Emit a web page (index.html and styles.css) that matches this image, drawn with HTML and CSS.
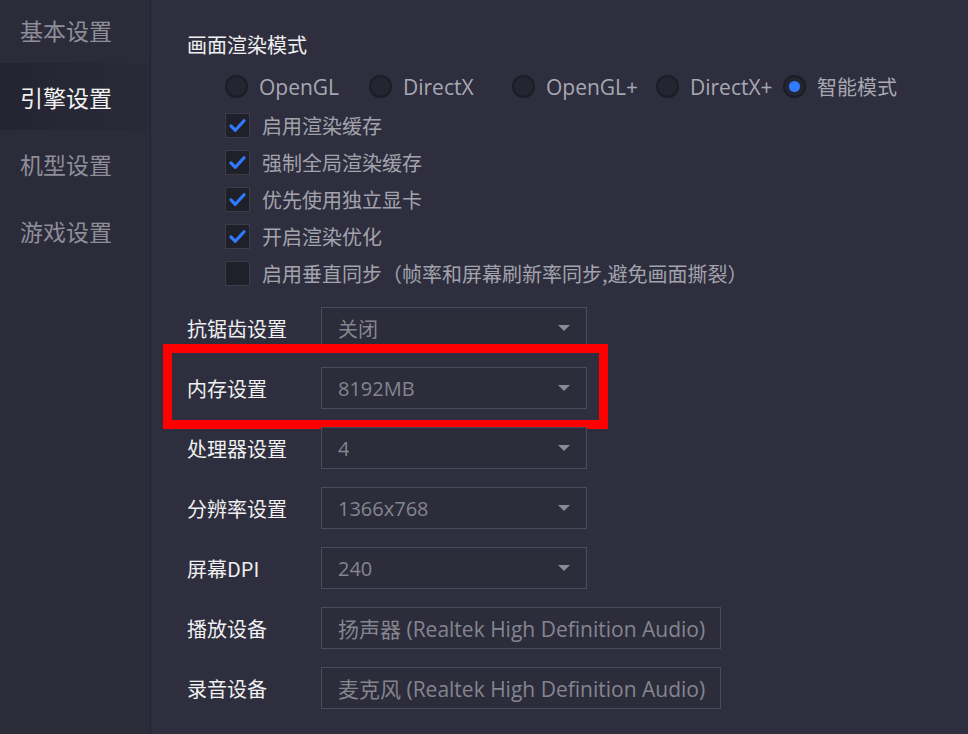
FILE: index.html
```html
<!DOCTYPE html>
<html lang="zh">
<head>
    <meta charset="UTF-8">
    <title>引擎设置</title>
    <link rel="stylesheet" href="styles.css">
</head>
<body>
    <div class="window">
        <div class="sidebar">
            <div class="nav-item">基本设置</div>
            <div class="nav-item active">引擎设置</div>
            <div class="nav-item">机型设置</div>
            <div class="nav-item">游戏设置</div>
        </div>

        <div class="main">
            <div class="section-title">画面渲染模式</div>

            <div class="options">
                <div class="radio-row">
                    <label class="radio"><span class="dot"></span>OpenGL</label>
                    <label class="radio"><span class="dot"></span>DirectX</label>
                    <label class="radio"><span class="dot"></span>OpenGL+</label>
                    <label class="radio"><span class="dot"></span>DirectX+</label>
                    <label class="radio on"><span class="dot"></span>智能模式</label>
                </div>

                <div class="check-list">
                    <label class="check on"><span class="box"><svg viewBox="0 0 24 24" width="21" height="21"><polyline points="4.5,12.5 9.5,17.5 19.5,6.5" fill="none" stroke="#2f7bff" stroke-width="3.6" stroke-linecap="round" stroke-linejoin="round"/></svg></span>启用渲染缓存</label>
                    <label class="check on"><span class="box"><svg viewBox="0 0 24 24" width="21" height="21"><polyline points="4.5,12.5 9.5,17.5 19.5,6.5" fill="none" stroke="#2f7bff" stroke-width="3.6" stroke-linecap="round" stroke-linejoin="round"/></svg></span>强制全局渲染缓存</label>
                    <label class="check on"><span class="box"><svg viewBox="0 0 24 24" width="21" height="21"><polyline points="4.5,12.5 9.5,17.5 19.5,6.5" fill="none" stroke="#2f7bff" stroke-width="3.6" stroke-linecap="round" stroke-linejoin="round"/></svg></span>优先使用独立显卡</label>
                    <label class="check on"><span class="box"><svg viewBox="0 0 24 24" width="21" height="21"><polyline points="4.5,12.5 9.5,17.5 19.5,6.5" fill="none" stroke="#2f7bff" stroke-width="3.6" stroke-linecap="round" stroke-linejoin="round"/></svg></span>开启渲染优化</label>
                    <label class="check"><span class="box"></span>启用垂直同步（帧率和屏幕刷新率同步,避免画面撕裂）</label>
                </div>
            </div>

            <div class="form">
                <div class="form-row">
                    <span class="form-label">抗锯齿设置</span>
                    <div class="select"><span class="value">关闭</span><span class="arrow"></span></div>
                </div>
                <div class="form-row marked">
                    <span class="form-label">内存设置</span>
                    <div class="select"><span class="value">8192MB</span><span class="arrow"></span></div>
                    <div class="highlight"></div>
                </div>
                <div class="form-row">
                    <span class="form-label">处理器设置</span>
                    <div class="select"><span class="value">4</span><span class="arrow"></span></div>
                </div>
                <div class="form-row">
                    <span class="form-label">分辨率设置</span>
                    <div class="select"><span class="value">1366x768</span><span class="arrow"></span></div>
                </div>
                <div class="form-row">
                    <span class="form-label">屏幕DPI</span>
                    <div class="select"><span class="value">240</span><span class="arrow"></span></div>
                </div>
                <div class="form-row">
                    <span class="form-label">播放设备</span>
                    <div class="select wide"><span class="value">扬声器 (Realtek High Definition Audio)</span></div>
                </div>
                <div class="form-row">
                    <span class="form-label">录音设备</span>
                    <div class="select wide"><span class="value">麦克风 (Realtek High Definition Audio)</span></div>
                </div>
            </div>
        </div>
    </div>
</body>
</html>
```

FILE: styles.css
```css
html, body {
    margin: 0;
    padding: 0;
    height: 100%;
    overflow: hidden;
}
body {
    font-family: "Open Sans", "Noto Sans CJK SC", sans-serif;
    background-color: #2e2e3e;
}
.window {
    display: flex;
    height: 100%;
}
.sidebar {
    width: 150px;
    flex: none;
    background-color: #2b2b3a;
    border-right: 1px solid #242430;
}
.nav-item {
    height: 67px;
    display: flex;
    align-items: center;
    padding-left: 20px;
    font-family: "Noto Sans CJK SC", sans-serif;
    font-size: 23px;
    color: #8e8e98;
}
.nav-item:first-child {
    margin-top: -4px;
}
.nav-item.active {
    color: #f2f2f2;
    background: linear-gradient(90deg, #242431 0%, #262634 35%, #292937 100%);
}
.main {
    flex: 1;
    padding: 31px 0 0 36px;
}
.section-title {
    font-family: "Noto Sans CJK SC", sans-serif;
    font-size: 20px;
    line-height: 28px;
    color: #f0f0f0;
}
.options {
    margin-left: 38px;
}
.radio-row {
    display: grid;
    grid-template-columns: 144px 143px 144px 127px auto;
    height: 24px;
    margin-top: 13px;
}
.radio {
    display: flex;
    align-items: center;
    white-space: nowrap;
    font-size: 21px;
    color: #a8a8b2;
}
.dot {
    width: 19px;
    height: 19px;
    border-radius: 50%;
    background-color: #252532;
    border: 2px solid #1c1c27;
    margin-right: 11px;
    flex: none;
    display: flex;
    align-items: center;
    justify-content: center;
}
.radio.on .dot::after {
    content: "";
    width: 11px;
    height: 11px;
    border-radius: 50%;
    background-color: #2f7bff;
}
.radio.on {
    font-family: "Noto Sans CJK SC", sans-serif;
    font-size: 20px;
}
.check-list {
    margin-top: 11px;
}
.check {
    display: flex;
    align-items: center;
    height: 37px;
    font-family: "Noto Sans CJK SC", sans-serif;
    font-size: 20px;
    color: #a3a3ad;
    white-space: nowrap;
}
.box {
    width: 23px;
    height: 23px;
    flex: none;
    background-color: #20202b;
    border: 1px solid #3b3b4a;
    margin-right: 12px;
    display: flex;
    align-items: center;
    justify-content: center;
}
.form {
    margin-top: 15px;
    display: flex;
    flex-direction: column;
    gap: 18px;
}
.form-row {
    display: flex;
    align-items: center;
    height: 42px;
    position: relative;
}
.form-label {
    width: 134px;
    flex: none;
    font-family: "Noto Sans CJK SC", sans-serif;
    font-size: 20px;
    color: #f0f0f0;
}
.select {
    box-sizing: border-box;
    width: 266px;
    height: 42px;
    border: 1px solid #4a4a5a;
    background-color: #2c2c3b;
    display: flex;
    align-items: center;
    justify-content: space-between;
    padding: 0 16px 0 16px;
    overflow: hidden;
}
.select.wide {
    width: 400px;
    padding-right: 14px;
}
.value {
    font-size: 20px;
    color: #85858f;
    white-space: nowrap;
    overflow: hidden;
}
.select.wide .value {
    font-size: 21px;
}
.arrow {
    flex: none;
    width: 0;
    height: 0;
    border-left: 6px solid transparent;
    border-right: 6px solid transparent;
    border-top: 6px solid #8a8a95;
}
.highlight {
    position: absolute;
    left: -24px;
    top: -23px;
    width: 427px;
    height: 67px;
    border: 9px solid #ff0000;
    pointer-events: none;
}
```
